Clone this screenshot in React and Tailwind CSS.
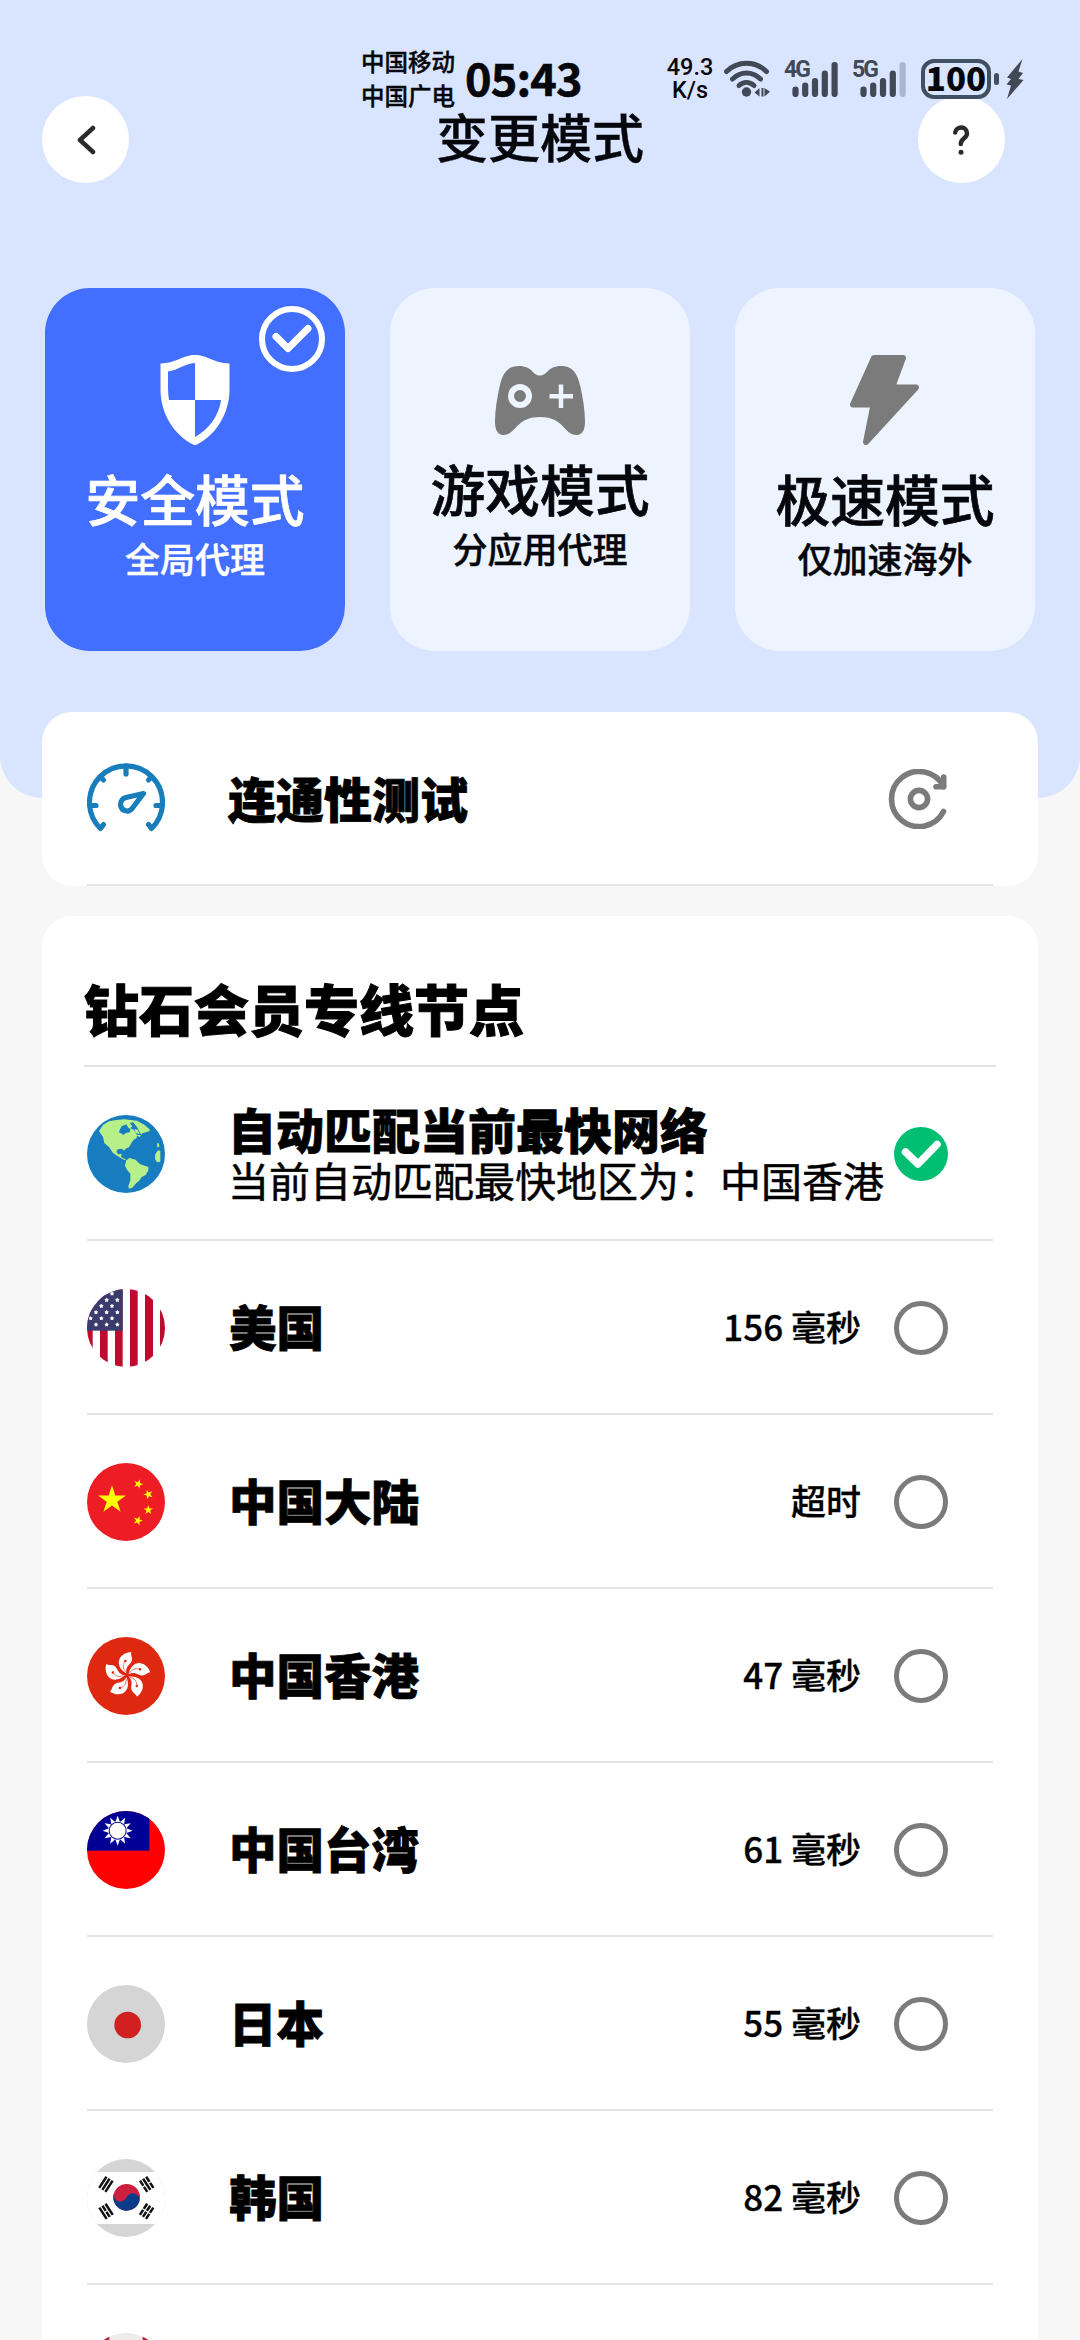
import { Fragment } from 'react';

const starPoints = (cx, cy, r, turn = 0, n = 5, inner = 0.382) =>
  Array.from({ length: n * 2 }, (_, i) => {
    const a = (Math.PI * i) / n - Math.PI / 2 + (turn * Math.PI) / 180;
    const d = i % 2 ? r * inner : r;
    return `${(cx + d * Math.cos(a)).toFixed(1)},${(cy + d * Math.sin(a)).toFixed(1)}`;
  }).join(' ');

const Round = ({ children }) => (
  <svg viewBox="0 0 234 234" className="size-[78px] shrink-0 rounded-full">
    {children}
  </svg>
);

const Globe = () => (
  <Round>
    <rect width="234" height="234" fill="#187dc0" />
    <g fill="#b7f088">
      <path d="M36 48 L48 30 L66 19 L88 15 L112 13 L150 17 L172 29 L189 44 L186 49 L166 55 L158 66 L150 62 L148 70 L140 74 L132 86 L126 97 L115 101 L112 107 L104 101 L92 103 L88 111 L94 118 L104 116 L102 126 L112 131 L118 134 L112 135 L96 126 L78 114 L66 96 L52 84 L48 66 Z" />
      <path d="M117 137 L127 129 L146 134 L152 141 L160 148 L184 156 L184 166 L176 180 L164 186 L156 198 L148 204 L136 218 L126 221 L124 214 L130 196 L130 176 L120 164 L114 152 Z" />
      <path d="M213 106 L220 108 L220 140 L210 142 L204 132 L205 118 Z" />
      <path d="M210 84 L216 86 L217 95 L211 97 Z" />
    </g>
    <g fill="#187dc0">
      <path d="M104 34 L118 28 L124 38 L130 42 L128 52 L116 54 L110 60 L96 52 L98 44 Z" />
      <path d="M138 22 L150 36 L158 52 L164 60 L150 60 L140 44 L130 40 L136 34 L128 24 Z" />
    </g>
    <path d="M142 42 L152 44 L158 58 L146 54 Z" fill="#b7f088" />
  </Round>
);

const usStars = [
  [75, 14], [59, 33], [91, 33], [43, 51], [75, 51], [27, 70], [59, 70], [91, 70],
  [43, 88], [11, 88], [27, 107], [59, 107], [91, 107], [75, 88],
];

const FlagUS = () => (
  <Round>
    <rect width="234" height="234" fill="#fff" />
    <g fill="#bf0a30">
      <rect width="17" height="234" />
      <rect x="39" width="23" height="234" />
      <rect x="84" width="23" height="234" />
      <rect x="129" width="23" height="234" />
      <rect x="174" width="24" height="234" />
      <rect x="219" width="15" height="234" />
    </g>
    <rect width="107" height="125" fill="#3c3b6e" />
    {usStars.map(([x, y]) => (
      <polygon key={`${x}-${y}`} points={starPoints(x, y, 7, 0, 5, 0.6)} fill="#fff" />
    ))}
  </Round>
);

const FlagCN = () => (
  <Round>
    <rect width="234" height="234" fill="#ee1c25" />
    <g fill="#ff0">
      <polygon points={starPoints(75, 111, 44)} />
      <polygon points={starPoints(154, 63, 15, 20)} />
      <polygon points={starPoints(184, 94, 15, -20)} />
      <polygon points={starPoints(184, 141, 15, 0)} />
      <polygon points={starPoints(153, 173, 15, 20)} />
    </g>
  </Round>
);

const FlagHK = () => (
  <Round>
    <rect width="234" height="234" fill="#de2910" />
    {[0, 72, 144, 216, 288].map((turn) => (
      <g key={turn} transform={`translate(120 115) rotate(${turn})`}>
        <path d="M-2 -6 C-20 -16 -30 -34 -22 -50 C-16 -62 0 -70 13 -69 C10 -62 18 -52 14 -42 C9 -30 -5 -28 -2 -6 Z" fill="#fff" />
        <path d="M-4 -10 C-12 -20 -14 -30 -7 -40" fill="none" stroke="#de2910" strokeWidth="1.8" />
        <circle cx="-5" cy="-43" r="3.8" fill="#de2910" />
      </g>
    ))}
  </Round>
);

const FlagTW = () => (
  <Round>
    <rect width="234" height="234" fill="#fe0000" />
    <rect width="187" height="119" fill="#000095" />
    <polygon points={starPoints(92, 59, 45, 0, 12, 0.6)} fill="#fff" />
    <circle cx="92" cy="59" r="27" fill="#000095" />
    <circle cx="92" cy="59" r="24" fill="#fff" />
  </Round>
);

const FlagJP = () => (
  <Round>
    <rect width="234" height="234" fill="#d5d5d5" />
    <circle cx="122" cy="120" r="40" fill="#d0201f" />
  </Round>
);

const trigrams = [
  { x: 57, y: 76, turn: -57, broken: [] },
  { x: 179, y: 76, turn: 57, broken: [0, 2] },
  { x: 57, y: 157, turn: 57, broken: [1] },
  { x: 179, y: 157, turn: -57, broken: [0, 1, 2] },
];

const FlagKR = () => (
  <Round>
    <rect width="234" height="234" fill="#d5d5d5" />
    <rect y="39" width="234" height="156" fill="#fff" />
    <g transform="translate(119 115) rotate(22)">
      <circle r="40" fill="#cd1f3f" />
      <path d="M-40 0 A20 20 0 0 0 0 0 A20 20 0 0 1 40 0 A40 40 0 0 1 -40 0 Z" fill="#0a3b88" />
    </g>
    {trigrams.map(({ x, y, turn, broken }) => (
      <g key={`${x}-${y}`} transform={`translate(${x} ${y}) rotate(${turn})`}>
        {[0, 1, 2].map((i) => (
          <Fragment key={i}>
            <rect x="-20" y={i * 11 - 15} width="40" height="7.5" fill="#111" />
            {broken.includes(i) && <rect x="-1.8" y={i * 11 - 16} width="3.6" height="10" fill="#fff" />}
          </Fragment>
        ))}
      </g>
    ))}
  </Round>
);

const FlagCA = () => (
  <Round>
    <rect width="234" height="234" fill="#ececec" />
    <rect width="67" height="234" fill="#b5202f" />
    <rect x="167" width="67" height="234" fill="#b5202f" />
  </Round>
);

const Gauge = () => (
  <svg
    viewBox="0 0 78 78"
    className="mb-[2px] size-[78px] shrink-0"
    fill="none"
    stroke="#187dba"
    strokeWidth="5.2"
    strokeLinecap="round"
    strokeLinejoin="round"
  >
    <path d="M16.5 65.5 L13.5 69.5 A36.5 36.5 0 1 1 64.5 69.5 L61.5 65.5" />
    <path d="M39 7 V15 M13.5 18 L16.5 21 M64.5 18 L61.5 21 M3 46.5 H9 M69 46.5 H75" />
    <path d="M56.5 34.5 L39 38.5 C35 39.5 33.5 42.5 33.5 46 C34.5 52.5 42 54 45.5 49 Z" />
  </svg>
);

const Rescan = () => (
  <svg
    viewBox="0 0 60 60"
    className="size-[60px]"
    fill="none"
    stroke="#7b7b7b"
    strokeWidth="5.6"
    strokeLinecap="round"
    strokeLinejoin="round"
  >
    <path d="M55.5 17.5 A27.5 27.5 0 1 0 55.5 42.5" />
    <path d="M48 17.8 H55.7 V8" />
    <circle cx="31" cy="30" r="8.6" />
  </svg>
);

const Shield = () => (
  <svg viewBox="0 0 90 90" className="size-[90px]">
    <path d="M45 0 C57 0 63 8 79.500 8.500 V33 C80 58 66 81 45 90.500 C24 81 10 58 10.500 33 V8.500 C27 8 33 0 45 0 Z" fill="#fff" />
    <path d="M45 8 C34 9 28 15 18 16.500 V33 Q18 39 19 45 H45 Z" fill="#426fff" />
    <path d="M45 45 H71 C69 61 58 75 45 82 Z" fill="#426fff" />
  </svg>
);

const Gamepad = () => (
  <svg viewBox="0 0 90 69" className="h-[69px] w-[90px]">
    <path d="M45 9.500 C53 9.500 52 0 66 0 C76 0 82 5 85.500 21 C88 33 90 44 90 56 C90 64 87 69 82 69 C68 69 70 51 45 51 C20 51 22 69 8 69 C3 69 0 64 0 56 C0 44 2 33 4.500 21 C8 5 14 0 24 0 C38 0 37 9.500 45 9.500 Z" fill="#7b7b7b" />
    <circle cx="25" cy="30" r="9" fill="none" stroke="#edf4ff" strokeWidth="6" />
    <path d="M66 18.500 V42 M54.500 30.200 H78" stroke="#edf4ff" strokeWidth="4.500" />
  </svg>
);

const Bolt = () => (
  <svg viewBox="0 0 90 90" className="size-[90px]">
    <path
      d="M34 3 H63 L52 32.500 H76 L26 87 L33.500 49.500 H13 Z"
      fill="#7b7b7b"
      stroke="#7b7b7b"
      strokeWidth="6"
      strokeLinejoin="round"
    />
  </svg>
);

const Signal = ({ label, weak }) => (
  <div className="relative h-9 w-[54px]">
    <span className="absolute -top-[5px] -left-px font-['Roboto',sans-serif] text-[23px] leading-7 font-bold tracking-[-2px] text-[#414856]">
      {label}
    </span>
    <svg viewBox="0 0 54 36" className="size-full" strokeWidth="6.2" strokeLinecap="round" stroke="#414856">
      <path d="M10.500 28.500 V33 M20.200 24.500 V33 M30 20 V33 M39.800 12.500 V33" />
      <path d="M49.600 4 V33" stroke={weak ? '#a9b6cf' : '#414856'} />
    </svg>
  </div>
);

const StatusBar = () => (
  <div className="relative z-10 flex h-24 items-start pl-[361px] text-[#05070c]">
    <div className="mt-[44px] w-[104px] text-[23.500px] leading-[34px] font-medium whitespace-nowrap [-webkit-text-stroke:0.4px]">
      <p>中国移动</p>
      <p>中国广电</p>
    </div>
    <span className="mt-[50px] w-[201px] text-[45px] leading-[54px] font-bold tracking-[-0.8px] [-webkit-text-stroke:0.6px]">
      05:43
    </span>
    <div className="mt-[56px] w-[48px] text-center font-['Roboto',sans-serif] text-[23.500px] leading-[23px] font-medium">
      <p>49.3</p>
      <p>K/s</p>
    </div>
    <svg viewBox="0 0 48 38" className="mt-[60px] ml-[9px] h-[38px] w-12" fill="none" stroke="#414856" strokeWidth="5" strokeLinecap="round">
      <path d="M3.500 11.500 C15 0.500 32 0.500 43.500 11.500" />
      <path d="M9.500 19 C18 11 29 11 37.500 19" />
      <path d="M16 25.500 C20.500 21.500 26.500 21.500 31 25.500" />
      <circle cx="23.500" cy="32" r="4.700" fill="#414856" stroke="none" />
      <path d="M36.500 28 V36.500 L31.500 32.500 Z M38.500 28 H40.500 V36.500 H38.500 Z M41.500 28 V36.500 L47 31.700 Z" fill="#414856" stroke="none" />
    </svg>
    <div className="mt-[61px] ml-[14px] flex gap-[14px]">
      <Signal label="4G" />
      <Signal label="5G" weak />
    </div>
    <div className="mt-[59px] ml-[14px] flex h-10 w-[70px] items-center justify-center rounded-[13px] border-4 border-[#414f62] pb-1 text-[33px] leading-10 font-black">
      100
    </div>
    <div className="mt-[73px] ml-[3px] h-3 w-[5px] rounded-sm bg-[#414f62]" />
    <svg viewBox="0 0 18 40" className="mt-[59px] ml-[7px] h-10 w-[18px]">
      <path d="M16.500 0 L1 18.500 L5 20 L0.500 25.500 L5 26.500 L1 40 L17.500 21 L12.500 20 L17 14 L12.500 12.500 Z" fill="#414856" />
    </svg>
  </div>
);

const Header = () => (
  <header className="flex h-[87px] items-center justify-between pr-[75px] pl-[42px]">
    <button className="flex size-[87px] items-center justify-center rounded-full bg-white">
      <svg viewBox="0 0 30 30" className="size-[30px]" fill="none" stroke="#2b2b2b" strokeWidth="4.500" strokeLinecap="round" strokeLinejoin="round">
        <path d="M22 3 L9 15 L22 27" />
      </svg>
    </button>
    <h1 className="ml-[33px] pb-[7px] text-[52px] leading-[64px] font-medium text-[#05070c] [-webkit-text-stroke:0.4px]">变更模式</h1>
    <button className="flex size-[87px] items-center justify-center rounded-full bg-white">
      <svg viewBox="0 0 30 30" className="size-[30px]" fill="none" stroke="#2b2b2b" strokeWidth="4.500" strokeLinecap="round">
        <path d="M9.200 7.500 C10 0.800 21 0.500 21 8.500 C21 13.500 14.800 13 14.800 19" />
        <circle cx="15" cy="27.300" r="2.500" fill="#2b2b2b" stroke="none" />
      </svg>
    </button>
  </header>
);

const modes = [
  { title: '安全模式', desc: '全局代理', Icon: Shield, active: true },
  { title: '游戏模式', desc: '分应用代理', Icon: Gamepad },
  { title: '极速模式', desc: '仅加速海外', Icon: Bolt },
];

const ModeCard = ({ title, desc, Icon, active }) => (
  <div
    className={`relative flex h-[363px] w-[300px] flex-col items-center justify-center rounded-[45px] ${
      active ? 'bg-[#426fff] text-white' : 'bg-[#edf4ff] text-[#05070c]'
    }`}
  >
    {active && (
      <svg viewBox="0 0 66 66" className="absolute top-[18px] right-5 size-[66px]" fill="none" stroke="#fff" strokeLinecap="round" strokeLinejoin="round">
        <circle cx="33" cy="33" r="30" strokeWidth="6" />
        <path d="M17 30.500 L29 42.500 L49 22.500" strokeWidth="7" />
      </svg>
    )}
    <Icon />
    <p className="mt-3 text-[54.800px] leading-[80px] font-medium [-webkit-text-stroke:0.7px]">{title}</p>
    <p className="mb-[5px] text-[35px] leading-[42px] font-medium [-webkit-text-stroke:0.4px]">{desc}</p>
  </div>
);

const nodes = [
  { name: '美国', ping: '156 毫秒', Flag: FlagUS },
  { name: '中国大陆', ping: '超时', Flag: FlagCN },
  { name: '中国香港', ping: '47 毫秒', Flag: FlagHK },
  { name: '中国台湾', ping: '61 毫秒', Flag: FlagTW },
  { name: '日本', ping: '55 毫秒', Flag: FlagJP },
  { name: '韩国', ping: '82 毫秒', Flag: FlagKR },
  { Flag: FlagCA },
];

const NodeRow = ({ name, ping, Flag }) => (
  <li className="mx-[45px] flex h-[174px] items-center border-b-2 border-[#e4e4e4] pt-[2px] pr-[45px]">
    <Flag />
    <span className="ml-16 flex-1 pb-[5px] text-[47.500px] leading-[70px] font-black [-webkit-text-stroke:0.8px]">{name}</span>
    <span className="pb-1 text-[35px] leading-[50px] font-medium [-webkit-text-stroke:0.3px]">{ping}</span>
    <span className="ml-[33px] size-[54px] rounded-full border-[5px] border-[#7b7b7b]" />
  </li>
);

export default function App() {
  return (
    <div className="h-[2340px] w-[1080px] overflow-hidden bg-[#f7f7f7] font-['Noto_Sans_CJK_SC',sans-serif] text-black">
      <div className="h-[798px] rounded-b-[42px] bg-[#d9e5ff]">
        <StatusBar />
        <Header />
        <div className="mt-[105px] flex gap-[45px] px-[45px]">
          {modes.map((mode) => (
            <ModeCard key={mode.title} {...mode} />
          ))}
        </div>
      </div>

      <main className="-mt-[86px] px-[42px]">
        <section className="relative h-[174px] rounded-[30px] bg-white px-[45px]">
          <div className="flex h-[174px] items-center border-b-2 border-[#e4e4e4] pt-[2px] pr-[45px]">
            <Gauge />
            <span className="ml-[63px] flex-1 pb-[5px] text-[48px] leading-[70px] font-black [-webkit-text-stroke:0.8px]">
              连通性测试
            </span>
            <Rescan />
          </div>
        </section>

        <section className="mt-[30px] h-[1500px] rounded-[30px] bg-white">
          <h2 className="mx-[42px] h-[151px] border-b-2 border-[#e4e4e4] pt-[51px] text-[55px] leading-[80px] font-black [-webkit-text-stroke:1px]">
            钻石会员专线节点
          </h2>
          <ul>
            <li className="mx-[45px] flex h-[174px] items-center border-b-2 border-[#e4e4e4] pt-[2px] pr-[45px]">
              <Globe />
              <div className="ml-[63px] flex-1 pb-[5px] whitespace-nowrap">
                <p className="text-[48px] leading-[54px] font-black [-webkit-text-stroke:0.8px]">自动匹配当前最快网络</p>
                <p className="pt-px text-[41px] leading-[46px] [-webkit-text-stroke:0.5px]">当前自动匹配最快地区为：中国香港</p>
              </div>
              <svg viewBox="0 0 54 54" className="size-[54px] shrink-0">
                <circle cx="27" cy="27" r="27" fill="#00bf73" />
                <path d="M11.500 25 L24 37 L43 17.500" fill="none" stroke="#fff" strokeWidth="7.500" strokeLinecap="round" strokeLinejoin="round" />
              </svg>
            </li>
            {nodes.map((node, i) => (
              <NodeRow key={i} {...node} />
            ))}
          </ul>
        </section>
      </main>
    </div>
  );
}
